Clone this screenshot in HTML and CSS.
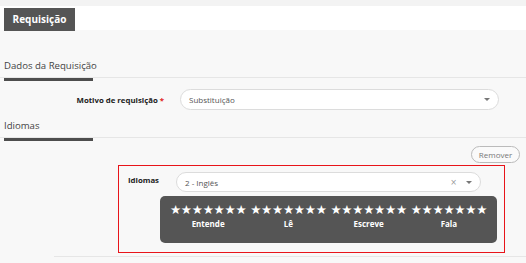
FILE: index.html
```html
<!DOCTYPE html>
<html>

<head>
    <meta charset="utf-8">
    <title>Requisição</title>
    <link rel="stylesheet" href="styles.css">
</head>

<body>
    <div class="top-strip"></div>
    <div class="tab-bar">
        <div class="tab">Requisição</div>
    </div>

    <div class="section-head first">
        <span class="section-title">Dados da Requisição</span>
    </div>

    <div class="form-row">
        <label class="row-label">Motivo de requisição <span class="req">*</span></label>
        <div class="select motivo">
            <span>Substituição</span>
            <span class="caret"></span>
        </div>
    </div>

    <div class="section-head second">
        <span class="section-title">Idiomas</span>
    </div>

    <div class="remove-row">
        <button class="btn-remove">Remover</button>
    </div>

    <div class="lang-box">
        <div class="lang-row">
            <label class="lang-label">Idiomas</label>
            <div class="select lang">
                <span>2 - Inglês</span>
                <span class="clear">×</span>
                <span class="caret"></span>
            </div>
        </div>
        <div class="skills">
            <div class="skill"><div class="stars">★★★★★★★</div><div class="skill-name">Entende</div></div>
            <div class="skill"><div class="stars">★★★★★★★</div><div class="skill-name">Lê</div></div>
            <div class="skill"><div class="stars">★★★★★★★</div><div class="skill-name">Escreve</div></div>
            <div class="skill"><div class="stars">★★★★★★★</div><div class="skill-name">Fala</div></div>
        </div>
    </div>

    <div class="bottom-line"></div>
</body>

</html>
```

FILE: styles.css
```css
* {
    margin: 0;
    padding: 0;
    box-sizing: border-box;
}

body {
    background: #f8f8f8;
    font-family: "Open Sans", "Noto Sans", sans-serif;
    color: #333;
    width: 526px;
    height: 263px;
    overflow: hidden;
}

.top-strip {
    height: 6px;
    background: #f3f3f3;
}

.tab-bar {
    background: #fff;
    height: 24px;
    padding-left: 4px;
}

.tab {
    display: inline-block;
    width: 71px;
    height: 23px;
    line-height: 23px;
    background: #555;
    color: #fff;
    font-weight: bold;
    font-size: 10px;
    text-align: center;
}

.section-head {
    position: relative;
    height: 24px;
    border-bottom: 1px solid #e6e6e6;
    padding-left: 4px;
    display: flex;
    align-items: flex-end;
    padding-bottom: 5px;
}

.section-head.first {
    margin-top: 24px;
}

.section-head.second {
    margin-top: 4px;
}

.section-head::after {
    content: "";
    position: absolute;
    left: 4px;
    bottom: -4px;
    width: 89px;
    height: 3px;
    background: #4d4d4d;
}

.section-title {
    font-size: 9.6px;
    color: #444;
}

.form-row {
    display: flex;
    align-items: center;
    margin-top: 11px;
    height: 21px;
}

.row-label {
    width: 166px;
    text-align: right;
    font-size: 7.8px;
    font-weight: bold;
    color: #222;
    padding-right: 2px;
}

.req {
    color: #e02020;
}

.select {
    display: flex;
    align-items: center;
    background: #fff;
    border: 1px solid #dcdcdc;
    border-radius: 11px;
    font-size: 8px;
    color: #555;
}

.select span:first-child {
    flex: 1;
}

.motivo {
    margin-left: 14px;
    width: 319px;
    height: 21px;
    padding: 0 8px;
}

.caret {
    width: 0;
    height: 0;
    border-left: 3px solid transparent;
    border-right: 3px solid transparent;
    border-top: 3px solid #777;
}

.remove-row {
    display: flex;
    justify-content: flex-end;
    padding-right: 6px;
    margin-top: 8px;
}

.btn-remove {
    width: 49px;
    height: 17px;
    border: 1px solid #bbb;
    border-radius: 9px;
    background: #fafafa;
    color: #777;
    font-family: "Open Sans", "Noto Sans", sans-serif;
    font-size: 8px;
}

.lang-box {
    margin-left: 118px;
    margin-top: 2px;
    width: 387px;
    height: 88px;
    border: 1.5px solid #e8141a;
    padding: 6px 6px 0 9px;
}

.lang-row {
    display: flex;
    align-items: center;
    height: 20px;
}

.lang-label {
    width: 48px;
    font-size: 7.8px;
    font-weight: bold;
    color: #222;
    align-self: flex-start;
    padding-top: 3px;
}

.lang {
    width: 305px;
    height: 20px;
    padding: 0 8px;
}

.clear {
    font-family: "DejaVu Sans", sans-serif;
    font-size: 8px;
    color: #999;
    margin-right: 9px;
}

.skills {
    display: flex;
    justify-content: space-around;
    margin: 4px 0 0 32px;
    width: 337px;
    height: 47px;
    background: #555;
    border-radius: 5px;
    padding: 7px 8px 0;
}

.skill {
    display: flex;
    flex-direction: column;
    align-items: center;
    color: #fff;
}

.stars {
    font-family: "DejaVu Sans", sans-serif;
    font-size: 12.5px;
    letter-spacing: -0.3px;
    line-height: 14px;
}

.skill-name {
    font-size: 8px;
    font-weight: bold;
    line-height: 14px;
}

.bottom-line {
    margin: 3px 0 0 54px;
    border-top: 1px solid #e6e6e6;
}
```
